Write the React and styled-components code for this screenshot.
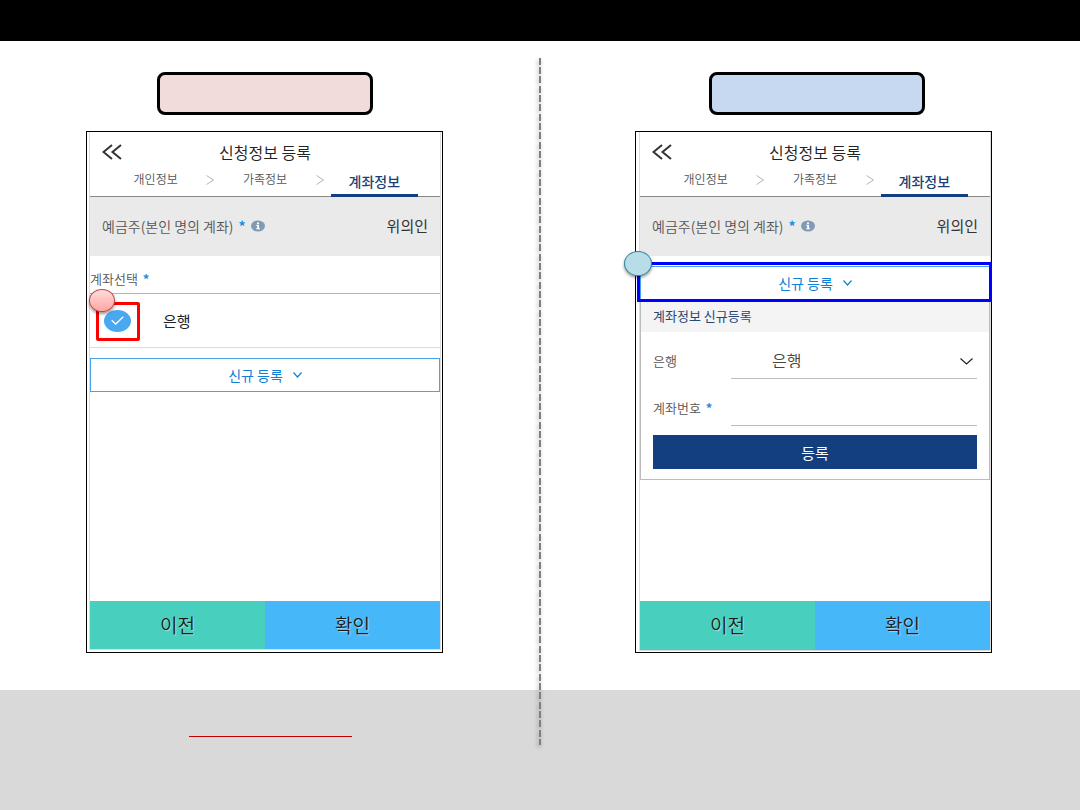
import React, { useId } from "react";
import styled, { createGlobalStyle, css } from "styled-components";

const GlobalStyle = createGlobalStyle`
  *, *::before, *::after { box-sizing: border-box; }
  body {
    margin: 0;
    background: #ffffff;
    color: #222222;
    font-family: "Noto Sans CJK KR", "Noto Sans", sans-serif;
    line-height: 1;
  }
  button, input, select { font: inherit; color: inherit; margin: 0; }
`;

const Page = styled.div`
  display: flex;
  flex-direction: column;
  min-height: 100vh;
`;

const TopBar = styled.header`
  height: 41px;
  background: #000000;
`;

const Board = styled.main`
  position: relative;
  display: grid;
  grid-template-columns: 1fr 1fr;
  padding-bottom: 37px;
`;

const Divider = styled.div`
  position: absolute;
  z-index: 1;
  top: 17px;
  bottom: -55px;
  left: calc(50% - 1px);
  width: 2px;
  background: repeating-linear-gradient(
    to bottom,
    #7f7f7f 0 7px, transparent 7px 9px,
    #7f7f7f 9px 16px, transparent 16px 18px,
    #7f7f7f 18px 25px, transparent 25px 28px
  );
  filter: drop-shadow(-1px 2px 2px rgba(0, 0, 0, 0.35));
`;

const Column = styled.section`
  display: flex;
  flex-direction: column;
  align-items: center;
  gap: 16px;
  padding: ${(p) => (p.$side === "left" ? "31px 11px 0 0" : "31px 0 0 7px")};
`;

const TagRow = styled.div`
  display: flex;
  justify-content: center;
  width: 100%;
  padding-left: ${(p) => (p.$side === "left" ? "0" : "6px")};
`;

const Tag = styled.div`
  width: 216px;
  height: 43px;
  border: 3px solid #000000;
  border-radius: 8px;
  background: ${(p) => p.$color};
`;

const Phone = styled.article`
  display: flex;
  width: 357px;
  max-width: 100%;
  min-height: 522px;
  border: 1px solid #000000;
  padding: ${(p) => (p.$side === "left" ? "0 1px 2px 2px" : "0 0 1px 3px")};
`;

const Screen = styled.div`
  display: flex;
  flex-direction: column;
  flex: 1;
  min-width: 0;
  border: solid #dcdcdc;
  border-width: 0 1px 1px;
`;

const TitleBar = styled.div`
  display: grid;
  grid-template-columns: 44px 1fr 44px;
  align-items: center;
  height: 40px;
`;

const BackButton = styled.button`
  display: flex;
  justify-content: center;
  padding: 0;
  border: 0;
  background: none;
  color: #333333;
`;

const Title = styled.h1`
  margin: 0;
  padding-bottom: 1px;
  font-size: 16px;
  font-weight: 350;
  text-align: center;
`;

const Steps = styled.nav`
  display: flex;
  height: 25px;
  padding: 0 22px;
  border-bottom: 1px solid #888888;
`;

const Step = styled.a`
  display: flex;
  flex: 1;
  align-items: center;
  justify-content: center;
  padding-bottom: 10px;
  font-size: 12px;
  font-weight: 350;
  color: #555555;
  text-decoration: none;
  ${(p) =>
    p.$active &&
    css`
      margin-bottom: -1px;
      padding-bottom: 5px;
      border-bottom: 3px solid #133f80;
      font-size: 14px;
      font-weight: 500;
      color: #1f3f74;
    `}
`;

const StepArrow = styled.span`
  display: flex;
  align-items: center;
  justify-content: center;
  width: 22px;
  padding-bottom: 8px;
  color: #b4b4b4;
`;

const HolderRow = styled.div`
  display: flex;
  align-items: center;
  justify-content: space-between;
  height: 59px;
  padding: 0 12px 2px;
  background: #eaeaea;
`;

const HolderLabel = styled.span`
  display: flex;
  align-items: center;
  gap: 5px;
  font-size: 14px;
  font-weight: 350;
  color: #555555;
`;

const HolderName = styled.span`
  font-size: 15px;
  color: #333333;
`;

const Required = styled.span`
  font-weight: 700;
  color: #1c8ee0;
`;

const Body = styled.div`
  flex: 1;
`;

const SectionLabel = styled.h2`
  display: flex;
  align-items: center;
  gap: 5px;
  height: 38px;
  margin: 0;
  padding-top: 8px;
  border-bottom: 1px solid #b4b4b4;
  font-size: 13px;
  font-weight: 350;
  color: #555555;
`;

const AccountRow = styled.label`
  position: relative;
  display: flex;
  align-items: center;
  gap: 32px;
  height: 54px;
  padding-left: 14px;
  border-bottom: 1px solid #dcdcdc;
  font-size: 15px;
`;

const CheckWrap = styled.span`
  display: grid;
  width: 27px;
  height: 22px;
  > * { grid-area: 1 / 1; place-self: center; }
`;

const CheckInput = styled.input`
  appearance: none;
  width: 27px;
  height: 22px;
  border-radius: 50%;
  background: #4aa8f0;
`;

const Highlight = styled.span`
  position: absolute;
  pointer-events: none;
  ${(p) =>
    p.$tone === "red"
      ? css`
          left: 6px;
          top: 8px;
          width: 44px;
          height: 39px;
          border: 3px solid #ff0000;
          border-radius: 2px;
        `
      : css`
          inset: -4px -2px -2px -3px;
          border: 3px solid #0000ff;
        `}
`;

const Marker = styled.span`
  position: absolute;
  border-radius: 50%;
  box-shadow: 0 2px 3px rgba(0, 0, 0, 0.4);
  ${(p) =>
    p.$tone === "red"
      ? css`
          left: -1px;
          top: -5px;
          width: 26px;
          height: 23px;
          border: 1px solid #be4b48;
          background: linear-gradient(#ffdcdc, #ffa5a5);
        `
      : css`
          left: -16px;
          top: -15px;
          width: 28px;
          height: 25px;
          border: 1px solid #31859c;
          background: #b7dde8;
        `}
`;

const NewAccount = styled.div`
  position: relative;
  margin-top: 10px;
`;

const NewButton = styled.button`
  display: flex;
  align-items: center;
  justify-content: center;
  gap: 10px;
  width: 100%;
  height: 34px;
  padding: 0 0 1px;
  border: 1px solid #4aa3e8;
  background: #ffffff;
  font-size: 14px;
  color: #0f80d4;
`;

const Form = styled.form`
  border: solid #bcbcbc;
  border-width: 0 1px 1px;
  padding-bottom: 10px;
`;

const FormTitle = styled.h2`
  display: flex;
  align-items: center;
  height: 32px;
  margin: 0;
  padding: 0 12px 2px;
  background: #f4f4f4;
  font-size: 13px;
  font-weight: 400;
  color: #2a4674;
`;

const Field = styled.div`
  display: grid;
  grid-template-columns: 78px 1fr;
  align-items: center;
  margin: 12px 12px 0;
`;

const FieldLabel = styled.label`
  display: flex;
  gap: 5px;
  padding-bottom: 3px;
  font-size: 13px;
  font-weight: 350;
  color: #555555;
`;

const control = css`
  appearance: none;
  width: 100%;
  height: 35px;
  border: 0;
  border-bottom: 1px solid #bcbcbc;
  border-radius: 0;
  background: transparent;
  font-size: 16px;
  font-weight: 350;
  color: #444444;
`;

const SelectWrap = styled.div`
  display: grid;
  align-items: center;
  > * { grid-area: 1 / 1; }
  > svg { justify-self: end; margin-right: 4px; pointer-events: none; }
`;

const Select = styled.select`
  ${control}
  padding: 0 24px 2px 41px;
`;

const TextInput = styled.input`
  ${control}
  padding: 0;
`;

const Submit = styled.button`
  display: block;
  width: calc(100% - 24px);
  height: 34px;
  margin: 9px 12px 0;
  padding: 0;
  border: 0;
  background: #133f80;
  font-size: 15px;
  color: #ffffff;
`;

const Actions = styled.footer`
  display: grid;
  grid-template-columns: 1fr 1fr;
  height: ${(p) => (p.$side === "left" ? "48px" : "49px")};
`;

const Action = styled.button`
  padding: 0 0 2px;
  border: 0;
  background: ${(p) => p.$color};
  font-size: 19px;
  font-weight: 350;
  color: #1c1c1c;
  text-shadow: 1px 1px 1px rgba(255, 255, 255, 0.5);
`;

const Notes = styled.footer`
  display: grid;
  grid-template-columns: 1fr 1fr;
  flex: 1;
  min-height: 120px;
  padding-top: 46px;
  background: #d9d9d9;
`;

const NoteRule = styled.hr`
  width: 163px;
  height: 1px;
  margin: 0 auto;
  border: 0;
  background: #c00000;
`;

const Down = ({ width, height }) => (
  <svg width={width} height={height} viewBox={`0 0 ${width} ${height}`} fill="none" stroke="currentColor" strokeWidth="1.2" aria-hidden="true">
    <path d={`M0.5 0.5 L${width / 2} ${height - 1} L${width - 0.5} 0.5`} />
  </svg>
);

const StepDivider = () => (
  <StepArrow>
    <svg width="8" height="10" viewBox="0 0 8 10" fill="none" stroke="currentColor" aria-hidden="true">
      <path d="M0.5 0.5 L7.5 5 L0.5 9.5" />
    </svg>
  </StepArrow>
);

const InfoIcon = () => (
  <svg width="14" height="12" viewBox="0 0 14 12" aria-hidden="true">
    <ellipse cx="7" cy="6" rx="7" ry="5.6" fill="#819bb5" />
    <path d="M6 2.4h2v1.5H6zM5.2 4.8H8v3.4h1v1H5.2v-1h1V5.8h-1z" fill="#ffffff" />
  </svg>
);

function PhoneFrame({ side, children }) {
  return (
    <Phone $side={side}>
      <Screen>
        <TitleBar>
          <BackButton type="button" aria-label="이전">
            <svg width="20" height="16" viewBox="0 0 20 16" fill="none" stroke="currentColor" strokeWidth="2" aria-hidden="true">
              <path d="M10 1 L1.5 8 L10 15 M19 1 L10.5 8 L19 15" />
            </svg>
          </BackButton>
          <Title>신청정보 등록</Title>
        </TitleBar>
        <Steps>
          <Step href="#personal">개인정보</Step>
          <StepDivider />
          <Step href="#family">가족정보</Step>
          <StepDivider />
          <Step href="#account" $active aria-current="step">계좌정보</Step>
        </Steps>
        <HolderRow>
          <HolderLabel>
            예금주(본인 명의 계좌) <Required>*</Required>
            <InfoIcon />
          </HolderLabel>
          <HolderName>위의인</HolderName>
        </HolderRow>
        <Body>{children}</Body>
        <Actions $side={side}>
          <Action type="button" $color="#48cfbd">이전</Action>
          <Action type="button" $color="#46b7f9">확인</Action>
        </Actions>
      </Screen>
    </Phone>
  );
}

function AccountPicker() {
  return (
    <>
      <SectionLabel>계좌선택 <Required>*</Required></SectionLabel>
      <AccountRow>
        <CheckWrap>
          <CheckInput type="checkbox" defaultChecked />
          <svg width="13" height="9" viewBox="0 0 13 9" fill="none" stroke="#ffffff" strokeWidth="1.3" aria-hidden="true">
            <path d="M0.7 4.2 L4.7 8 L12.3 0.8" />
          </svg>
        </CheckWrap>
        은행
        <Highlight $tone="red" />
        <Marker $tone="red" />
      </AccountRow>
      <NewAccount>
        <NewButton type="button">신규 등록 <Down width={9} height={6} /></NewButton>
      </NewAccount>
    </>
  );
}

function AccountForm() {
  const bankId = useId();
  const numberId = useId();
  return (
    <>
      <NewAccount>
        <NewButton type="button">신규 등록 <Down width={9} height={6} /></NewButton>
        <Highlight $tone="blue" />
        <Marker $tone="blue" />
      </NewAccount>
      <Form onSubmit={(e) => e.preventDefault()}>
        <FormTitle>계좌정보 신규등록</FormTitle>
        <Field>
          <FieldLabel htmlFor={bankId}>은행</FieldLabel>
          <SelectWrap>
            <Select id={bankId} defaultValue="bank">
              <option value="bank">은행</option>
            </Select>
            <Down width={13} height={7} />
          </SelectWrap>
        </Field>
        <Field>
          <FieldLabel htmlFor={numberId}>계좌번호 <Required>*</Required></FieldLabel>
          <TextInput id={numberId} type="text" inputMode="numeric" />
        </Field>
        <Submit type="submit">등록</Submit>
      </Form>
    </>
  );
}

export default function App() {
  return (
    <Page>
      <GlobalStyle />
      <TopBar />
      <Board>
        <Column $side="left">
          <TagRow $side="left"><Tag $color="#f1dcdb" /></TagRow>
          <PhoneFrame side="left"><AccountPicker /></PhoneFrame>
        </Column>
        <Column $side="right">
          <TagRow $side="right"><Tag $color="#c6d9f1" /></TagRow>
          <PhoneFrame side="right"><AccountForm /></PhoneFrame>
        </Column>
        <Divider />
      </Board>
      <Notes>
        <NoteRule />
      </Notes>
    </Page>
  );
}
